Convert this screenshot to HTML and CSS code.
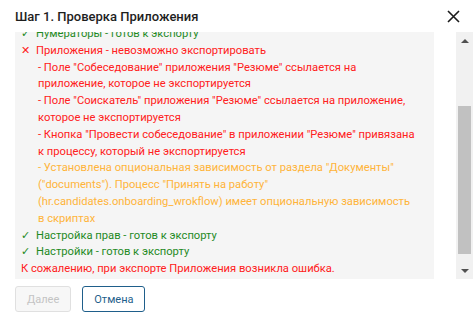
FILE: index.html
```html
<!DOCTYPE html>
<html lang="ru">
<head>
  <meta charset="UTF-8">
  <meta name="viewport" content="width=device-width, initial-scale=1">
  <title>Экспорт приложения</title>
  <link rel="stylesheet" href="styles.css">
</head>
<body>
  <div class="dialog">
    <div class="dialog-head">
      <h2 class="dialog-title">Шаг 1. Проверка Приложения</h2>
      <button class="close" title="Закрыть">
        <svg width="13" height="13" viewBox="0 0 13 13"><path d="M1 1L12 12M12 1L1 12" stroke="#1b1b1b" stroke-width="1.6" fill="none"/></svg>
      </button>
    </div>

    <div class="dialog-body">
      <div class="log" id="log">
        <div class="item ok"><span class="mark">✓</span>Разделы - готов к экспорту</div>
        <div class="item ok"><span class="mark">✓</span>Страницы - готов к экспорту</div>
        <div class="item ok"><span class="mark">✓</span>Виджеты - готов к экспорту</div>
        <div class="item ok"><span class="mark">✓</span>Модули - готов к экспорту</div>
        <div class="item ok"><span class="mark">✓</span>Процессы - готов к экспорту</div>
        <div class="item ok"><span class="mark">✓</span>Нумераторы - готов к экспорту</div>
        <div class="item fail"><span class="mark">✕</span>Приложения - невозможно экспортировать</div>
        <div class="details fail">
          <p>- Поле "Собеседование" приложения "Резюме" ссылается на приложение, которое не экспортируется</p>
          <p>- Поле "Соискатель" приложения "Резюме" ссылается на приложение, которое не экспортируется</p>
          <p>- Кнопка "Провести собеседование" в приложении "Резюме" привязана к процессу, который не экспортируется</p>
        </div>
        <div class="details warn">
          <p>- Установлена опциональная зависимость от раздела "Документы" ("documents"). Процесс "Принять на работу" (hr.candidates.onboarding_wrokflow) имеет опциональную зависимость в скриптах</p>
        </div>
        <div class="item ok"><span class="mark">✓</span>Настройка прав - готов к экспорту</div>
        <div class="item ok"><span class="mark">✓</span>Настройки - готов к экспорту</div>
        <div class="summary">К сожалению, при экспорте Приложения возникла ошибка.</div>
      </div>

      <div class="scrollbar">
        <span class="arrow up"></span>
        <div class="track">
          <div class="thumb" style="margin-top:57px;height:148px"></div>
        </div>
        <span class="arrow down"></span>
      </div>
    </div>

    <div class="dialog-foot">
      <button class="btn" disabled>Далее</button>
      <button class="btn btn-outline">Отмена</button>
    </div>
  </div>

  <script>
    // показываем конец журнала, как после прокрутки
    const log = document.getElementById("log");
    log.scrollTop = log.scrollHeight - log.clientHeight - 15;
  </script>
</body>
</html>
```

FILE: styles.css
```css
body {
  margin: 0;
  font-family: Roboto, "Noto Sans", sans-serif;
  background: #fff;
  color: #222;
}
.dialog {
  padding-left: 15px;
}
.dialog-head {
  display: flex;
  align-items: center;
  justify-content: space-between;
  height: 32px;
  padding-right: 13px;
}
.dialog-title {
  margin: 0;
  font-size: 13px;
  font-weight: 500;
  color: #1e1e1e;
}
.close {
  border: none;
  background: none;
  padding: 0;
  width: 13px;
  height: 13px;
  cursor: pointer;
}
.close svg {
  display: block;
}
.dialog-body {
  display: flex;
  height: 247px;
}
.log {
  flex: 1;
  margin-right: 22px;
  padding: 6px 18px 16px 6px;
  background: #f5f5f5;
  overflow: hidden;
  font-size: 0.7rem;
  line-height: 1.5;
}
.item {
  display: flex;
  gap: 6px;
}
.mark {
  width: 9px;
  flex: none;
  text-align: center;
}
.ok {
  color: #1f8a1f;
}
.fail {
  color: #ff2020;
}
.warn {
  color: #ffb43a;
}
.details {
  padding-left: 17px;
}
.details p {
  margin: 0;
}
.summary {
  color: #ff2020;
}
.scrollbar {
  width: 17px;
  display: flex;
  flex-direction: column;
  background: #f1f1f1;
}
.arrow {
  height: 17px;
  display: flex;
  align-items: center;
  justify-content: center;
}
.arrow::before {
  content: "";
  border-left: 4px solid transparent;
  border-right: 4px solid transparent;
}
.arrow.up::before {
  border-bottom: 4px solid #505050;
}
.arrow.down::before {
  border-top: 4px solid #505050;
}
.track {
  flex: 1;
  padding: 0 2px;
}
.thumb {
  background: #c1c1c1;
}
.dialog-foot {
  display: flex;
  gap: 11px;
  padding-top: 7px;
}
.btn {
  height: 26px;
  padding: 0 11px;
  border: 1px solid #1f5f8b;
  border-radius: 3px;
  background: #fff;
  color: #1f5f8b;
  font-family: inherit;
  font-size: 11px;
  cursor: pointer;
}
.btn:disabled {
  border-color: #e0e0e0;
  background: #f7f7f7;
  color: #c4c4c4;
  cursor: default;
}
```
